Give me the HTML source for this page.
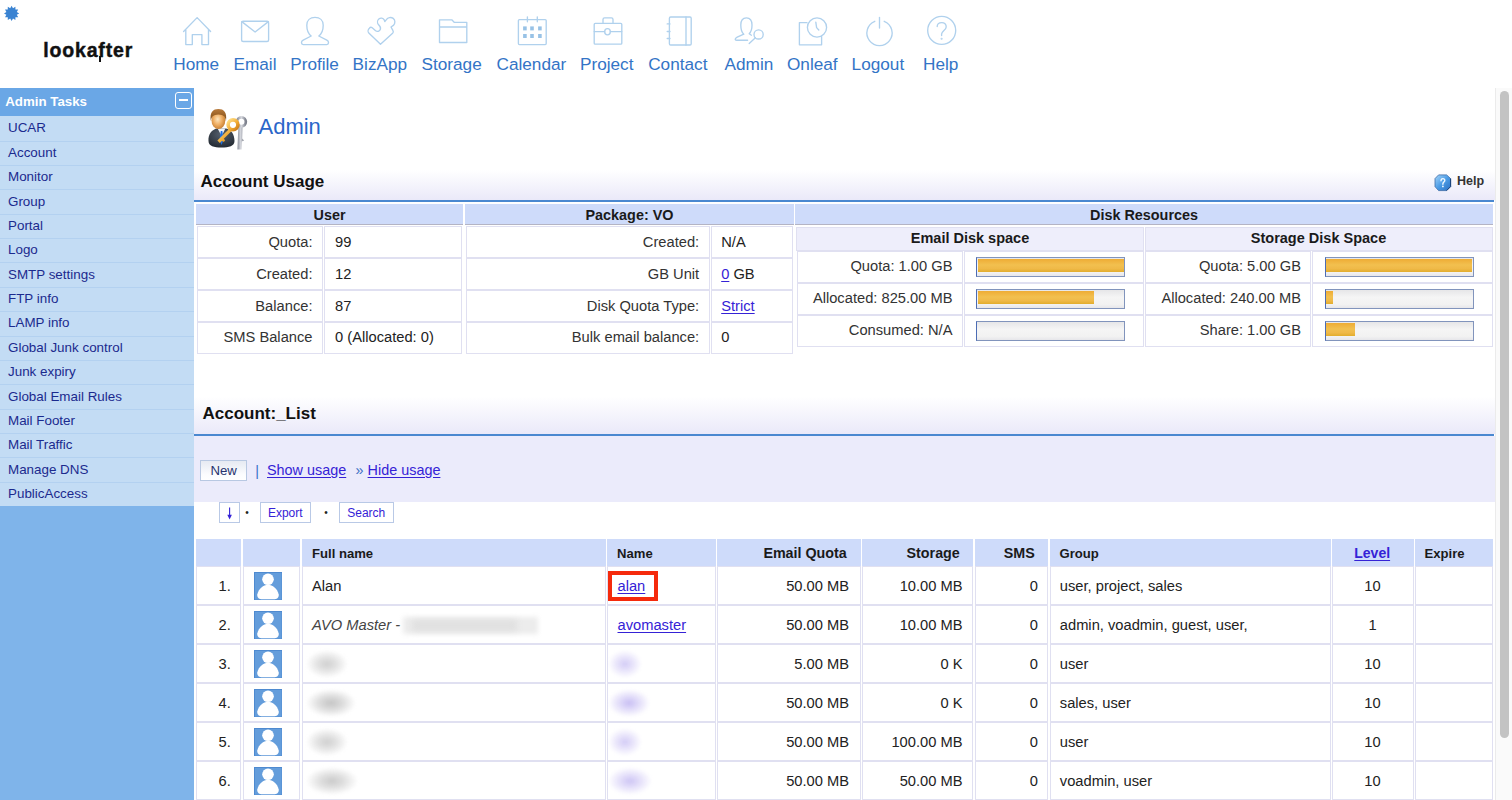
<!DOCTYPE html>
<html><head><meta charset="utf-8">
<style>
html,body{margin:0;padding:0;}
body{width:1512px;height:800px;overflow:hidden;position:relative;background:#fff;font-family:"Liberation Sans", sans-serif;}
.t{position:absolute;white-space:nowrap;line-height:normal;font-family:"Liberation Sans", sans-serif;}
u{text-decoration:underline;text-underline-offset:1.5px;}
</style></head><body>
<svg style="position:absolute;left:0;top:0" width="30" height="30"><polygon points="11.60,5.80 13.00,8.18 15.40,6.82 15.42,9.58 18.18,9.60 16.82,12.00 19.20,13.40 16.82,14.80 18.18,17.20 15.42,17.22 15.40,19.98 13.00,18.62 11.60,21.00 10.20,18.62 7.80,19.98 7.78,17.22 5.02,17.20 6.38,14.80 4.00,13.40 6.38,12.00 5.02,9.60 7.78,9.58 7.80,6.82 10.20,8.18" fill="#3a83d2"/></svg>
<div class="t" style="left:43.2px;top:38.75px;font-size:19.5px;color:#111;font-weight:bold;letter-spacing:0.85px;-webkit-text-stroke:0.45px #111;">lookafter</div>
<div style="position:absolute;left:98.6px;top:56px;width:2.4px;height:6px;background:#111;"></div>

<svg style="position:absolute;left:0;top:0" width="1000" height="90" fill="none" stroke="#b0d1ed" stroke-width="1.35" stroke-linejoin="round" stroke-linecap="round">
<!-- home -->
<path d="M183.6,31.5 L197.1,17.6 L210.6,31.5 M185.8,29.6 V44.6 H192.3 V34.6 H201.9 V44.6 H208.5 V29.6"/>
<!-- email -->
<rect x="241.6" y="21.2" width="27" height="20.3" rx="1.5"/>
<path d="M241.8,21.6 L255.1,32 L268.4,21.6"/>
<!-- profile -->
<path d="M311.2,36 C308,33.5 306.8,29 306.8,25.2 C306.8,20.2 310.2,17.4 315,17.4 C319.8,17.4 323.2,20.2 323.2,25.2 C323.2,29 322,33.5 318.8,36 L326.8,40.2 C329.2,41.4 329,44.6 326.8,44.6 L303.2,44.6 C301,44.6 300.8,41.4 303.2,40.2 Z"/>
<!-- bizapp puzzle -->
<path d="M380.5,44.3 L368.8,33 C367.6,31.8 368,29.6 369.4,28.2 C370.2,27.2 371.2,27 372.2,27.8 L375.6,30.8 C377.2,32 379.6,31.4 380.4,29.2 C381,27.6 379.6,25.8 378.4,24.6 C377.2,23 377.2,20.4 378.8,19 C380.6,17.6 383.2,18 384.2,19.8 L384.8,21.6 L386.4,19.6 C387.8,17.4 391,16.8 393.2,18.4 C395.4,20 395.4,23.6 393.4,25.4 L391,27 L393,30.6 C393.6,31.6 393.4,32.4 392.6,33.2 Z"/>
<!-- storage folder -->
<path d="M439.5,42.5 V19.8 H451.8 L454.4,22.4 H466.8 V42.5 Z M439.5,27 H466.8"/>
<!-- calendar -->
<rect x="518.4" y="19.6" width="27.8" height="25" rx="1"/>
<path d="M527.4,16.8 V21.8 M537.3,16.8 V21.8" />
<g fill="#98c2e6" stroke="none"><rect x="523.1" y="26.4" width="3.6" height="4"/><rect x="530.2" y="26.4" width="3.6" height="4"/><rect x="538.1" y="26.4" width="3.6" height="4"/><rect x="523.1" y="34" width="3.6" height="4"/><rect x="530.2" y="34" width="3.6" height="4"/><rect x="538.1" y="34" width="3.6" height="4"/></g>
<!-- project briefcase -->
<rect x="594.2" y="23.4" width="27.6" height="20.8" rx="1"/>
<path d="M603,23.4 V19.4 Q603,17.8 604.6,17.8 H611.4 Q613,17.8 613,19.4 V23.4 M594.2,31.6 H604.6 M610.4,31.6 H621.8"/>
<ellipse cx="607.5" cy="31.8" rx="2.8" ry="3.1"/>
<!-- contact notebook -->
<rect x="669.4" y="17" width="21.8" height="28" rx="1.2"/>
<path d="M686,17 V45 M667.2,23.9 H670 M667.2,31.5 H670 M667.2,38.5 H670"/>
<!-- admin person with key -->
<path d="M743.8,34.2 C741.6,32.4 740.8,28.6 740.8,25 C740.8,20.4 743,17.8 746.4,17.8 C749.8,17.8 752,20.4 752,25 C752,28.4 751.2,31.8 749.2,33.8 L751.4,35.2 M743.8,34.2 L737.2,37.2 C734.8,38.4 734.6,40.2 736.6,40.2 L747.6,40.2"/>
<circle cx="758.6" cy="34.4" r="4.6"/>
<path d="M755.4,37.8 L749.2,43.6"/>
<!-- onleaf -->
<path d="M807,22.6 H799.4 V44.8 H821.6 V36.4"/>
<circle cx="817" cy="27.5" r="9.6"/>
<path d="M815.8,22.2 L816.6,27.6 L818.8,30"/>
<!-- logout power -->
<path d="M874.8,21.3 A12.6,12.6 0 1 0 884.2,21.3"/>
<path d="M879.5,17.4 V28"/>
<!-- help -->
<circle cx="941.7" cy="30.4" r="14"/>
<path d="M937.2,26.6 C937.2,23.6 939.4,22.6 941.8,22.6 C944.4,22.6 946.4,24.4 946.2,27 C946,30 942,31 941.6,34 V35.6"/>
<circle cx="941.6" cy="38.8" r="0.4" fill="#b0d1ed"/>
</svg>
<div class="t" style="left:173.3px;top:53.53px;font-size:17.2px;color:#3374c6;font-weight:normal;">Home</div>
<div class="t" style="left:233.5px;top:53.53px;font-size:17.2px;color:#3374c6;font-weight:normal;">Email</div>
<div class="t" style="left:290.2px;top:53.53px;font-size:17.2px;color:#3374c6;font-weight:normal;">Profile</div>
<div class="t" style="left:352.6px;top:53.53px;font-size:17.2px;color:#3374c6;font-weight:normal;">BizApp</div>
<div class="t" style="left:421.5px;top:53.53px;font-size:17.2px;color:#3374c6;font-weight:normal;">Storage</div>
<div class="t" style="left:496.5px;top:53.53px;font-size:17.2px;color:#3374c6;font-weight:normal;">Calendar</div>
<div class="t" style="left:580px;top:53.53px;font-size:17.2px;color:#3374c6;font-weight:normal;">Project</div>
<div class="t" style="left:648.2px;top:53.53px;font-size:17.2px;color:#3374c6;font-weight:normal;">Contact</div>
<div class="t" style="left:724.6px;top:53.53px;font-size:17.2px;color:#3374c6;font-weight:normal;">Admin</div>
<div class="t" style="left:787px;top:53.53px;font-size:17.2px;color:#3374c6;font-weight:normal;">Onleaf</div>
<div class="t" style="left:851.6px;top:53.53px;font-size:17.2px;color:#3374c6;font-weight:normal;">Logout</div>
<div class="t" style="left:923px;top:53.53px;font-size:17.2px;color:#3374c6;font-weight:normal;">Help</div>
<div style="position:absolute;left:0px;top:88px;width:194px;height:712px;background:#7fb4ea;"></div>
<div style="position:absolute;left:0px;top:88px;width:194px;height:28px;background:#6aa7e6;"></div>
<div class="t" style="left:5.2px;top:94.16px;font-size:13.3px;color:#fff;font-weight:bold;">Admin Tasks</div>
<div style="position:absolute;left:175px;top:91.6px;width:17px;height:17px;border:1.5px solid #fff;border-radius:3px;box-sizing:border-box;"></div>
<div style="position:absolute;left:179px;top:99.3px;width:9px;height:2px;background:#fff;"></div>
<div style="position:absolute;left:0px;top:116px;width:194px;height:390px;background:#c3dcf4;"></div>
<div class="t" style="left:8px;top:120.47px;font-size:13.4px;color:#1b2a8e;font-weight:normal;">UCAR</div>
<div style="position:absolute;left:0px;top:140.5px;width:194px;height:1px;background:#b3d1f0;"></div>
<div class="t" style="left:8px;top:144.85px;font-size:13.4px;color:#1b2a8e;font-weight:normal;">Account</div>
<div style="position:absolute;left:0px;top:165.0px;width:194px;height:1px;background:#b3d1f0;"></div>
<div class="t" style="left:8px;top:169.22px;font-size:13.4px;color:#1b2a8e;font-weight:normal;">Monitor</div>
<div style="position:absolute;left:0px;top:189.0px;width:194px;height:1px;background:#b3d1f0;"></div>
<div class="t" style="left:8px;top:193.60px;font-size:13.4px;color:#1b2a8e;font-weight:normal;">Group</div>
<div style="position:absolute;left:0px;top:213.5px;width:194px;height:1px;background:#b3d1f0;"></div>
<div class="t" style="left:8px;top:217.97px;font-size:13.4px;color:#1b2a8e;font-weight:normal;">Portal</div>
<div style="position:absolute;left:0px;top:238.0px;width:194px;height:1px;background:#b3d1f0;"></div>
<div class="t" style="left:8px;top:242.35px;font-size:13.4px;color:#1b2a8e;font-weight:normal;">Logo</div>
<div style="position:absolute;left:0px;top:262.0px;width:194px;height:1px;background:#b3d1f0;"></div>
<div class="t" style="left:8px;top:266.72px;font-size:13.4px;color:#1b2a8e;font-weight:normal;">SMTP settings</div>
<div style="position:absolute;left:0px;top:286.5px;width:194px;height:1px;background:#b3d1f0;"></div>
<div class="t" style="left:8px;top:291.10px;font-size:13.4px;color:#1b2a8e;font-weight:normal;">FTP info</div>
<div style="position:absolute;left:0px;top:311.0px;width:194px;height:1px;background:#b3d1f0;"></div>
<div class="t" style="left:8px;top:315.47px;font-size:13.4px;color:#1b2a8e;font-weight:normal;">LAMP info</div>
<div style="position:absolute;left:0px;top:335.5px;width:194px;height:1px;background:#b3d1f0;"></div>
<div class="t" style="left:8px;top:339.85px;font-size:13.4px;color:#1b2a8e;font-weight:normal;">Global Junk control</div>
<div style="position:absolute;left:0px;top:360.0px;width:194px;height:1px;background:#b3d1f0;"></div>
<div class="t" style="left:8px;top:364.22px;font-size:13.4px;color:#1b2a8e;font-weight:normal;">Junk expiry</div>
<div style="position:absolute;left:0px;top:384.0px;width:194px;height:1px;background:#b3d1f0;"></div>
<div class="t" style="left:8px;top:388.60px;font-size:13.4px;color:#1b2a8e;font-weight:normal;">Global Email Rules</div>
<div style="position:absolute;left:0px;top:408.5px;width:194px;height:1px;background:#b3d1f0;"></div>
<div class="t" style="left:8px;top:412.97px;font-size:13.4px;color:#1b2a8e;font-weight:normal;">Mail Footer</div>
<div style="position:absolute;left:0px;top:433.0px;width:194px;height:1px;background:#b3d1f0;"></div>
<div class="t" style="left:8px;top:437.35px;font-size:13.4px;color:#1b2a8e;font-weight:normal;">Mail Traffic</div>
<div style="position:absolute;left:0px;top:457.0px;width:194px;height:1px;background:#b3d1f0;"></div>
<div class="t" style="left:8px;top:461.72px;font-size:13.4px;color:#1b2a8e;font-weight:normal;">Manage DNS</div>
<div style="position:absolute;left:0px;top:481.5px;width:194px;height:1px;background:#b3d1f0;"></div>
<div class="t" style="left:8px;top:486.10px;font-size:13.4px;color:#1b2a8e;font-weight:normal;">PublicAccess</div>
<div style="position:absolute;left:1495px;top:88px;width:17px;height:712px;background:#fafafa;border-left:1.5px solid #ebebeb;box-sizing:border-box;"></div>
<div style="position:absolute;left:1499.5px;top:91.2px;width:9.5px;height:647.3px;background:#c3c3c3;border-radius:5px;"></div>
<svg style="position:absolute;left:200px;top:100px" width="55" height="55" viewBox="200 100 55 55">
<defs>
<radialGradient id="face" cx="0.45" cy="0.45" r="0.6"><stop offset="0" stop-color="#fde6c0"/><stop offset="0.5" stop-color="#f0b066"/><stop offset="1" stop-color="#c47a2c"/></radialGradient>
<linearGradient id="hair" x1="0" y1="0" x2="0" y2="1"><stop offset="0" stop-color="#b87a3a"/><stop offset="1" stop-color="#7a4814"/></linearGradient>
<radialGradient id="suit" cx="0.5" cy="0.3" r="0.8"><stop offset="0" stop-color="#55606e"/><stop offset="1" stop-color="#1e242c"/></radialGradient>
<linearGradient id="gold" x1="0" y1="0" x2="1" y2="1"><stop offset="0" stop-color="#ffe08a"/><stop offset="0.6" stop-color="#f0a830"/><stop offset="1" stop-color="#c87818"/></linearGradient>
<linearGradient id="silver" x1="0" y1="0" x2="1" y2="0"><stop offset="0" stop-color="#8a8e9a"/><stop offset="0.5" stop-color="#d6d8de"/><stop offset="1" stop-color="#7c808c"/></linearGradient>
</defs>
<path d="M208.5,141 C208,134 212,129.5 217,128.5 L226,128.5 C231,129.5 234.5,134 234.5,141 C234.5,146 229,147.5 221.5,147.5 C214,147.5 208.5,146 208.5,141 Z" fill="url(#suit)"/>
<path d="M217.6,128.6 L221.6,136 L225.4,128.6 Z" fill="#eef2f8"/>
<path d="M220.8,131 L222.4,131 L223.4,140 L221.6,145 L219.4,140 Z" fill="#1f6fe0"/>
<ellipse cx="218.4" cy="120.2" rx="6.9" ry="8.9" fill="url(#face)"/>
<path d="M210.8,121 C209.6,112 213,109 218.4,109 C223.8,109 227.2,112 226,121 C225.4,116.5 223.6,114.6 218.4,114.4 C213.2,114.6 211.4,116.5 210.8,121 Z" fill="url(#hair)"/>
<path d="M238.4,125 L237.4,149.6 L241.4,149.6 L241.8,141.6 L244,140.6 L242.2,138.6 L242.6,125 Z" fill="url(#silver)"/>
<circle cx="241.4" cy="121.8" r="4.4" fill="none" stroke="url(#silver)" stroke-width="2.8"/>
<path d="M229.8,128.2 L217.4,140.4 L219.8,143 L222,140.8 L223.8,142 L225.2,140.2 L223.8,138.8 L232.2,130.6 Z" fill="url(#gold)"/>
<circle cx="233" cy="124.8" r="4.9" fill="none" stroke="url(#gold)" stroke-width="3.6"/>
</svg>
<div class="t" style="left:258.5px;top:114.39px;font-size:22px;color:#2a66c9;font-weight:normal;">Admin</div>
<div style="position:absolute;left:194px;top:160px;width:1301px;height:40px;background:linear-gradient(#ffffff 0%, #ffffff 25%, #eae9f9 100%);"></div>
<div style="position:absolute;left:194px;top:200px;width:1300px;height:2px;background:#4a88d0;"></div>
<div class="t" style="left:200.5px;top:171.92px;font-size:17px;color:#111;font-weight:bold;">Account Usage</div>
<div class="t" style="left:1457px;top:174.19px;font-size:12.5px;color:#333;font-weight:bold;">Help</div>
<svg style="position:absolute;left:1434px;top:174px" width="18" height="18" viewBox="0 0 18 18">
<defs><linearGradient id="hg" x1="0" y1="0" x2="1" y2="1"><stop offset="0" stop-color="#a6d6fa"/><stop offset="0.5" stop-color="#4c9ce6"/><stop offset="1" stop-color="#2a6ec0"/></linearGradient></defs>
<polygon points="4.6,0.9 12.6,0.9 16.6,4.6 16.6,12.6 12.6,16.6 4.6,16.6 1,12.6 1,4.6" fill="url(#hg)" stroke="#3a6aa6" stroke-width="0.8"/>
<path d="M16.6,4.6 V12.6 L12.6,16.6" fill="none" stroke="#173f78" stroke-width="1"/>
<path d="M7,6.8 C7,5.2 7.8,4.6 8.9,4.6 C10.1,4.6 10.8,5.3 10.8,6.4 C10.8,7.8 9,8.2 8.9,9.6 V10.2" fill="none" stroke="#f0f8ff" stroke-width="1.4" stroke-linecap="round"/>
<circle cx="8.9" cy="12.4" r="0.9" fill="#f0f8ff"/>
</svg>
<div style="position:absolute;left:196px;top:204px;width:267px;height:21px;background:#cedbfa;border-bottom:1.5px solid #b4b4c4;box-sizing:border-box;"></div>
<div style="position:absolute;left:465px;top:204px;width:329px;height:21px;background:#cedbfa;border-bottom:1.5px solid #b4b4c4;box-sizing:border-box;"></div>
<div style="position:absolute;left:795px;top:204px;width:698px;height:21px;background:#cedbfa;border-bottom:1.5px solid #b4b4c4;box-sizing:border-box;"></div>
<div class="t" style="left:29.5px;width:600px;text-align:center;top:207.27px;font-size:14.4px;color:#1a1a1a;font-weight:bold;">User</div>
<div class="t" style="left:329.5px;width:600px;text-align:center;top:207.27px;font-size:14.4px;color:#1a1a1a;font-weight:bold;">Package: VO</div>
<div class="t" style="left:844px;width:600px;text-align:center;top:206.77px;font-size:14.4px;color:#1a1a1a;font-weight:bold;">Disk Resources</div>
<div style="position:absolute;left:197px;top:226px;width:126px;height:32px;background:#fff;border:1px solid #e0e0f1;box-sizing:border-box;"></div>
<div style="position:absolute;left:324px;top:226px;width:138px;height:32px;background:#fff;border:1px solid #e0e0f1;box-sizing:border-box;"></div>
<div style="position:absolute;left:466px;top:226px;width:244px;height:32px;background:#fff;border:1px solid #e0e0f1;box-sizing:border-box;"></div>
<div style="position:absolute;left:711px;top:226px;width:82px;height:32px;background:#fff;border:1px solid #e0e0f1;box-sizing:border-box;"></div>
<div class="t" style="left:-287.5px;width:600px;text-align:right;top:234.10px;font-size:14.7px;color:#333;font-weight:normal;">Quota:</div>
<div class="t" style="left:335px;top:234.10px;font-size:14.7px;color:#222;font-weight:normal;">99</div>
<div class="t" style="left:99.20000000000005px;width:600px;text-align:right;top:234.10px;font-size:14.7px;color:#333;font-weight:normal;">Created:</div>
<div class="t" style="left:721.2px;top:234.10px;font-size:14.7px;color:#222;font-weight:normal;">N/A</div>
<div style="position:absolute;left:197px;top:258px;width:126px;height:32px;background:#fff;border:1px solid #e0e0f1;box-sizing:border-box;"></div>
<div style="position:absolute;left:324px;top:258px;width:138px;height:32px;background:#fff;border:1px solid #e0e0f1;box-sizing:border-box;"></div>
<div style="position:absolute;left:466px;top:258px;width:244px;height:32px;background:#fff;border:1px solid #e0e0f1;box-sizing:border-box;"></div>
<div style="position:absolute;left:711px;top:258px;width:82px;height:32px;background:#fff;border:1px solid #e0e0f1;box-sizing:border-box;"></div>
<div class="t" style="left:-287.5px;width:600px;text-align:right;top:265.60px;font-size:14.7px;color:#333;font-weight:normal;">Created:</div>
<div class="t" style="left:335px;top:265.60px;font-size:14.7px;color:#222;font-weight:normal;">12</div>
<div class="t" style="left:99.20000000000005px;width:600px;text-align:right;top:265.60px;font-size:14.7px;color:#333;font-weight:normal;">GB Unit</div>
<div class="t" style="left:721.2px;top:265.60px;font-size:14.7px;color:#222;font-weight:normal;"><u style="color:#3522d6">0</u> GB</div>
<div style="position:absolute;left:197px;top:290px;width:126px;height:32px;background:#fff;border:1px solid #e0e0f1;box-sizing:border-box;"></div>
<div style="position:absolute;left:324px;top:290px;width:138px;height:32px;background:#fff;border:1px solid #e0e0f1;box-sizing:border-box;"></div>
<div style="position:absolute;left:466px;top:290px;width:244px;height:32px;background:#fff;border:1px solid #e0e0f1;box-sizing:border-box;"></div>
<div style="position:absolute;left:711px;top:290px;width:82px;height:32px;background:#fff;border:1px solid #e0e0f1;box-sizing:border-box;"></div>
<div class="t" style="left:-287.5px;width:600px;text-align:right;top:297.50px;font-size:14.7px;color:#333;font-weight:normal;">Balance:</div>
<div class="t" style="left:335px;top:297.50px;font-size:14.7px;color:#222;font-weight:normal;">87</div>
<div class="t" style="left:99.20000000000005px;width:600px;text-align:right;top:297.50px;font-size:14.7px;color:#333;font-weight:normal;">Disk Quota Type:</div>
<div class="t" style="left:721.2px;top:297.50px;font-size:14.7px;color:#222;font-weight:normal;"><u style="color:#3522d6">Strict</u></div>
<div style="position:absolute;left:197px;top:322px;width:126px;height:32px;background:#fff;border:1px solid #e0e0f1;box-sizing:border-box;"></div>
<div style="position:absolute;left:324px;top:322px;width:138px;height:32px;background:#fff;border:1px solid #e0e0f1;box-sizing:border-box;"></div>
<div style="position:absolute;left:466px;top:322px;width:244px;height:32px;background:#fff;border:1px solid #e0e0f1;box-sizing:border-box;"></div>
<div style="position:absolute;left:711px;top:322px;width:82px;height:32px;background:#fff;border:1px solid #e0e0f1;box-sizing:border-box;"></div>
<div class="t" style="left:-287.5px;width:600px;text-align:right;top:329.00px;font-size:14.7px;color:#333;font-weight:normal;">SMS Balance</div>
<div class="t" style="left:335px;top:329.00px;font-size:14.7px;color:#222;font-weight:normal;">0 (Allocated: 0)</div>
<div class="t" style="left:99.20000000000005px;width:600px;text-align:right;top:329.00px;font-size:14.7px;color:#333;font-weight:normal;">Bulk email balance:</div>
<div class="t" style="left:721.2px;top:329.00px;font-size:14.7px;color:#222;font-weight:normal;">0</div>
<div style="position:absolute;left:796px;top:227px;width:348px;height:24px;background:#eeeefb;border:1px solid #e0e0f1;box-sizing:border-box;"></div>
<div style="position:absolute;left:1145px;top:227px;width:348px;height:24px;background:#eeeefb;border:1px solid #e0e0f1;box-sizing:border-box;"></div>
<div class="t" style="left:670px;width:600px;text-align:center;top:230.48px;font-size:14.5px;color:#1a1a1a;font-weight:bold;">Email Disk space</div>
<div class="t" style="left:1018.5px;width:600px;text-align:center;top:230.48px;font-size:14.5px;color:#1a1a1a;font-weight:bold;">Storage Disk Space</div>
<div style="position:absolute;left:797px;top:251px;width:166px;height:32px;background:#fff;border:1px solid #e0e0f1;box-sizing:border-box;"></div>
<div style="position:absolute;left:964px;top:251px;width:180px;height:32px;background:#fff;border:1px solid #e0e0f1;box-sizing:border-box;"></div>
<div style="position:absolute;left:1145px;top:251px;width:166px;height:32px;background:#fff;border:1px solid #e0e0f1;box-sizing:border-box;"></div>
<div style="position:absolute;left:1312px;top:251px;width:181px;height:32px;background:#fff;border:1px solid #e0e0f1;box-sizing:border-box;"></div>
<div class="t" style="left:352.5px;width:600px;text-align:right;top:258.20px;font-size:14.7px;color:#333;font-weight:normal;">Quota: 1.00 GB</div>
<div class="t" style="left:701px;width:600px;text-align:right;top:258.20px;font-size:14.7px;color:#333;font-weight:normal;">Quota: 5.00 GB</div>
<div style="position:absolute;left:976px;top:257px;width:149px;height:20px;background:linear-gradient(#e6e6e8,#f5f5f5 40%,#f2f2f2 80%,#e6e6ea);border:1.5px solid #8194bc;border-left-color:#4c6cb4;box-sizing:border-box;"></div>
<div style="position:absolute;left:977.5px;top:259.2px;width:146.0px;height:12.8px;background:linear-gradient(#eeac35,#f2c04f 45%,#efb948 75%,#e2ad2c);"></div>
<div style="position:absolute;left:1324.5px;top:257px;width:149px;height:20px;background:linear-gradient(#e6e6e8,#f5f5f5 40%,#f2f2f2 80%,#e6e6ea);border:1.5px solid #8194bc;border-left-color:#4c6cb4;box-sizing:border-box;"></div>
<div style="position:absolute;left:1326.0px;top:259.2px;width:146.0px;height:12.8px;background:linear-gradient(#eeac35,#f2c04f 45%,#efb948 75%,#e2ad2c);"></div>
<div style="position:absolute;left:797px;top:283px;width:166px;height:32px;background:#fff;border:1px solid #e0e0f1;box-sizing:border-box;"></div>
<div style="position:absolute;left:964px;top:283px;width:180px;height:32px;background:#fff;border:1px solid #e0e0f1;box-sizing:border-box;"></div>
<div style="position:absolute;left:1145px;top:283px;width:166px;height:32px;background:#fff;border:1px solid #e0e0f1;box-sizing:border-box;"></div>
<div style="position:absolute;left:1312px;top:283px;width:181px;height:32px;background:#fff;border:1px solid #e0e0f1;box-sizing:border-box;"></div>
<div class="t" style="left:352.5px;width:600px;text-align:right;top:290.30px;font-size:14.7px;color:#333;font-weight:normal;">Allocated: 825.00 MB</div>
<div class="t" style="left:701px;width:600px;text-align:right;top:290.30px;font-size:14.7px;color:#333;font-weight:normal;">Allocated: 240.00 MB</div>
<div style="position:absolute;left:976px;top:289px;width:149px;height:20px;background:linear-gradient(#e6e6e8,#f5f5f5 40%,#f2f2f2 80%,#e6e6ea);border:1.5px solid #8194bc;border-left-color:#4c6cb4;box-sizing:border-box;"></div>
<div style="position:absolute;left:977.5px;top:291.2px;width:116.8px;height:12.8px;background:linear-gradient(#eeac35,#f2c04f 45%,#efb948 75%,#e2ad2c);"></div>
<div style="position:absolute;left:1324.5px;top:289px;width:149px;height:20px;background:linear-gradient(#e6e6e8,#f5f5f5 40%,#f2f2f2 80%,#e6e6ea);border:1.5px solid #8194bc;border-left-color:#4c6cb4;box-sizing:border-box;"></div>
<div style="position:absolute;left:1326.0px;top:291.2px;width:6.7px;height:12.8px;background:linear-gradient(#eeac35,#f2c04f 45%,#efb948 75%,#e2ad2c);"></div>
<div style="position:absolute;left:797px;top:315px;width:166px;height:32px;background:#fff;border:1px solid #e0e0f1;box-sizing:border-box;"></div>
<div style="position:absolute;left:964px;top:315px;width:180px;height:32px;background:#fff;border:1px solid #e0e0f1;box-sizing:border-box;"></div>
<div style="position:absolute;left:1145px;top:315px;width:166px;height:32px;background:#fff;border:1px solid #e0e0f1;box-sizing:border-box;"></div>
<div style="position:absolute;left:1312px;top:315px;width:181px;height:32px;background:#fff;border:1px solid #e0e0f1;box-sizing:border-box;"></div>
<div class="t" style="left:352.5px;width:600px;text-align:right;top:322.00px;font-size:14.7px;color:#333;font-weight:normal;">Consumed: N/A</div>
<div class="t" style="left:701px;width:600px;text-align:right;top:322.00px;font-size:14.7px;color:#333;font-weight:normal;">Share: 1.00 GB</div>
<div style="position:absolute;left:976px;top:321px;width:149px;height:20px;background:linear-gradient(#e6e6e8,#f5f5f5 40%,#f2f2f2 80%,#e6e6ea);border:1.5px solid #8194bc;border-left-color:#4c6cb4;box-sizing:border-box;"></div>
<div style="position:absolute;left:1324.5px;top:321px;width:149px;height:20px;background:linear-gradient(#e6e6e8,#f5f5f5 40%,#f2f2f2 80%,#e6e6ea);border:1.5px solid #8194bc;border-left-color:#4c6cb4;box-sizing:border-box;"></div>
<div style="position:absolute;left:1326.0px;top:323.2px;width:28.6px;height:12.8px;background:linear-gradient(#eeac35,#f2c04f 45%,#efb948 75%,#e2ad2c);"></div>
<div style="position:absolute;left:194px;top:390px;width:1301px;height:44px;background:linear-gradient(#ffffff 0%, #ffffff 15%, #eae9f9 100%);"></div>
<div style="position:absolute;left:194px;top:434px;width:1300px;height:2px;background:#4a88d0;"></div>
<div class="t" style="left:202.5px;top:403.62px;font-size:17px;color:#111;font-weight:bold;">Account:_List</div>
<div style="position:absolute;left:194px;top:436px;width:1301px;height:66px;background:#ebebfb;"></div>
<div style="position:absolute;left:200.2px;top:460.3px;width:46.6px;height:20.4px;background:linear-gradient(#e6eaf2,#fbfcfe 70%,#fff);border:1.6px solid #b8c8e2;box-sizing:border-box;"></div>
<div class="t" style="left:-76.30000000000001px;width:600px;text-align:center;top:463.35px;font-size:13.2px;color:#27336e;font-weight:normal;">New</div>
<div class="t" style="left:255.2px;top:462.68px;font-size:14.5px;color:#3a74c8;font-weight:normal;">|</div>
<div class="t" style="left:267px;top:462.27px;font-size:14.4px;color:#3522d6;font-weight:normal;"><u>Show usage</u></div>
<div class="t" style="left:355.5px;top:462.27px;font-size:14.4px;color:#3a6fc4;font-weight:normal;">»</div>
<div class="t" style="left:367.6px;top:462.27px;font-size:14.4px;color:#3522d6;font-weight:normal;"><u>Hide usage</u></div>
<div style="position:absolute;left:219px;top:502px;width:21px;height:20.5px;background:#fff;border:1.5px solid #b9c9e6;box-sizing:border-box;"></div>
<div class="t" style="left:-70.5px;width:600px;text-align:center;top:504.84px;font-size:13px;color:#3522d6;font-weight:normal;"></div>
<svg style="position:absolute;left:220px;top:503px" width="20" height="20" viewBox="220 503 20 20"><path d="M229.6,507.6 V517" stroke="#3522d6" stroke-width="1.1"/><path d="M227.3,514.8 L229.6,519.4 L231.9,514.8 Z" fill="#3522d6"/></svg>
<div class="t" style="left:-53px;width:600px;text-align:center;top:506.95px;font-size:10px;color:#222;font-weight:normal;">•</div>
<div style="position:absolute;left:260px;top:502px;width:50.5px;height:20.5px;background:#fff;border:1.5px solid #b9c9e6;box-sizing:border-box;"></div>
<div class="t" style="left:-14.75px;width:600px;text-align:center;top:505.74px;font-size:12px;color:#3522d6;font-weight:normal;">Export</div>
<div class="t" style="left:26px;width:600px;text-align:center;top:506.95px;font-size:10px;color:#222;font-weight:normal;">•</div>
<div style="position:absolute;left:339px;top:502px;width:54.5px;height:20.5px;background:#fff;border:1.5px solid #b9c9e6;box-sizing:border-box;"></div>
<div class="t" style="left:66.25px;width:600px;text-align:center;top:505.74px;font-size:12px;color:#3522d6;font-weight:normal;">Search</div>
<div style="position:absolute;left:196px;top:538.5px;width:45px;height:28.5px;background:#cedbfa;border-bottom:1.5px solid #b4b4c4;box-sizing:border-box;"></div>
<div style="position:absolute;left:243px;top:538.5px;width:57px;height:28.5px;background:#cedbfa;border-bottom:1.5px solid #b4b4c4;box-sizing:border-box;"></div>
<div style="position:absolute;left:302px;top:538.5px;width:303.5px;height:28.5px;background:#cedbfa;border-bottom:1.5px solid #b4b4c4;box-sizing:border-box;"></div>
<div style="position:absolute;left:607px;top:538.5px;width:108.5px;height:28.5px;background:#cedbfa;border-bottom:1.5px solid #b4b4c4;box-sizing:border-box;"></div>
<div style="position:absolute;left:717px;top:538.5px;width:143.5px;height:28.5px;background:#cedbfa;border-bottom:1.5px solid #b4b4c4;box-sizing:border-box;"></div>
<div style="position:absolute;left:862px;top:538.5px;width:111px;height:28.5px;background:#cedbfa;border-bottom:1.5px solid #b4b4c4;box-sizing:border-box;"></div>
<div style="position:absolute;left:974.5px;top:538.5px;width:73.5px;height:28.5px;background:#cedbfa;border-bottom:1.5px solid #b4b4c4;box-sizing:border-box;"></div>
<div style="position:absolute;left:1049.5px;top:538.5px;width:281.0px;height:28.5px;background:#cedbfa;border-bottom:1.5px solid #b4b4c4;box-sizing:border-box;"></div>
<div style="position:absolute;left:1332px;top:538.5px;width:81.5px;height:28.5px;background:#cedbfa;border-bottom:1.5px solid #b4b4c4;box-sizing:border-box;"></div>
<div style="position:absolute;left:1414.5px;top:538.5px;width:78.5px;height:28.5px;background:#cedbfa;border-bottom:1.5px solid #b4b4c4;box-sizing:border-box;"></div>
<div class="t" style="left:312px;top:545.54px;font-size:13.1px;color:#1a1a1a;font-weight:bold;">Full name</div>
<div class="t" style="left:617px;top:545.54px;font-size:13.1px;color:#1a1a1a;font-weight:bold;">Name</div>
<div class="t" style="left:246.79999999999995px;width:600px;text-align:right;top:545.46px;font-size:14.3px;color:#1a1a1a;font-weight:bold;">Email Quota</div>
<div class="t" style="left:359.79999999999995px;width:600px;text-align:right;top:545.46px;font-size:14.3px;color:#1a1a1a;font-weight:bold;">Storage</div>
<div class="t" style="left:434.79999999999995px;width:600px;text-align:right;top:545.46px;font-size:14.3px;color:#1a1a1a;font-weight:bold;">SMS</div>
<div class="t" style="left:1059.5px;top:545.54px;font-size:13.1px;color:#1a1a1a;font-weight:bold;">Group</div>
<div class="t" style="left:1072.2px;width:600px;text-align:center;top:544.73px;font-size:14px;color:#3522d6;font-weight:bold;"><u style="color:#3522d6">Level</u></div>
<div class="t" style="left:1424.5px;top:545.54px;font-size:13.1px;color:#1a1a1a;font-weight:bold;">Expire</div>
<div style="position:absolute;left:196px;top:566px;width:45px;height:39px;background:#fff;border:1px solid #e0e0f1;box-sizing:border-box;"></div>
<div style="position:absolute;left:243px;top:566px;width:57px;height:39px;background:#fff;border:1px solid #e0e0f1;box-sizing:border-box;"></div>
<div style="position:absolute;left:302px;top:566px;width:303.5px;height:39px;background:#fff;border:1px solid #e0e0f1;box-sizing:border-box;"></div>
<div style="position:absolute;left:607px;top:566px;width:108.5px;height:39px;background:#fff;border:1px solid #e0e0f1;box-sizing:border-box;"></div>
<div style="position:absolute;left:717px;top:566px;width:143.5px;height:39px;background:#fff;border:1px solid #e0e0f1;box-sizing:border-box;"></div>
<div style="position:absolute;left:862px;top:566px;width:111px;height:39px;background:#fff;border:1px solid #e0e0f1;box-sizing:border-box;"></div>
<div style="position:absolute;left:974.5px;top:566px;width:73.5px;height:39px;background:#fff;border:1px solid #e0e0f1;box-sizing:border-box;"></div>
<div style="position:absolute;left:1049.5px;top:566px;width:281.0px;height:39px;background:#fff;border:1px solid #e0e0f1;box-sizing:border-box;"></div>
<div style="position:absolute;left:1332px;top:566px;width:81.5px;height:39px;background:#fff;border:1px solid #e0e0f1;box-sizing:border-box;"></div>
<div style="position:absolute;left:1414.5px;top:566px;width:78.5px;height:39px;background:#fff;border:1px solid #e0e0f1;box-sizing:border-box;"></div>
<div class="t" style="left:-369.2px;width:600px;text-align:right;top:577.50px;font-size:14.7px;color:#222;font-weight:normal;">1.</div>
<svg width="28.6" height="28.6" viewBox="0 0 29 29" style="position:absolute;left:253.8px;top:571.8px"><rect x="0" y="0" width="29" height="29" fill="#649ddb"/><rect x="0.5" y="0.5" width="28" height="28" fill="none" stroke="#4e8ad0" stroke-width="1"/><circle cx="14.2" cy="7.4" r="5.9" fill="#fff"/><path d="M14.2,13 C19,13 23.5,17 25,22.5 C25.6,25 24,27.4 21,27.6 L7.4,27.6 C4.4,27.4 2.8,25 3.4,22.5 C4.9,17 9.4,13 14.2,13 Z" fill="#fff"/></svg>
<div class="t" style="left:312px;top:577.50px;font-size:14.7px;color:#222;font-weight:normal;">Alan</div>
<div class="t" style="left:617.5px;top:577.50px;font-size:14.7px;color:#3522d6;font-weight:normal;"><u>alan</u></div>
<div class="t" style="left:249px;width:600px;text-align:right;top:577.50px;font-size:14.7px;color:#222;font-weight:normal;">50.00 MB</div>
<div class="t" style="left:362.5px;width:600px;text-align:right;top:577.50px;font-size:14.7px;color:#222;font-weight:normal;">10.00 MB</div>
<div class="t" style="left:437.79999999999995px;width:600px;text-align:right;top:577.50px;font-size:14.7px;color:#222;font-weight:normal;">0</div>
<div class="t" style="left:1059.8px;top:577.50px;font-size:14.7px;color:#222;font-weight:normal;">user, project, sales</div>
<div class="t" style="left:1072.5px;width:600px;text-align:center;top:577.50px;font-size:14.7px;color:#222;font-weight:normal;">10</div>
<div style="position:absolute;left:196px;top:605px;width:45px;height:39px;background:#fff;border:1px solid #e0e0f1;box-sizing:border-box;"></div>
<div style="position:absolute;left:243px;top:605px;width:57px;height:39px;background:#fff;border:1px solid #e0e0f1;box-sizing:border-box;"></div>
<div style="position:absolute;left:302px;top:605px;width:303.5px;height:39px;background:#fff;border:1px solid #e0e0f1;box-sizing:border-box;"></div>
<div style="position:absolute;left:607px;top:605px;width:108.5px;height:39px;background:#fff;border:1px solid #e0e0f1;box-sizing:border-box;"></div>
<div style="position:absolute;left:717px;top:605px;width:143.5px;height:39px;background:#fff;border:1px solid #e0e0f1;box-sizing:border-box;"></div>
<div style="position:absolute;left:862px;top:605px;width:111px;height:39px;background:#fff;border:1px solid #e0e0f1;box-sizing:border-box;"></div>
<div style="position:absolute;left:974.5px;top:605px;width:73.5px;height:39px;background:#fff;border:1px solid #e0e0f1;box-sizing:border-box;"></div>
<div style="position:absolute;left:1049.5px;top:605px;width:281.0px;height:39px;background:#fff;border:1px solid #e0e0f1;box-sizing:border-box;"></div>
<div style="position:absolute;left:1332px;top:605px;width:81.5px;height:39px;background:#fff;border:1px solid #e0e0f1;box-sizing:border-box;"></div>
<div style="position:absolute;left:1414.5px;top:605px;width:78.5px;height:39px;background:#fff;border:1px solid #e0e0f1;box-sizing:border-box;"></div>
<div class="t" style="left:-369.2px;width:600px;text-align:right;top:616.50px;font-size:14.7px;color:#222;font-weight:normal;">2.</div>
<svg width="28.6" height="28.6" viewBox="0 0 29 29" style="position:absolute;left:253.8px;top:610.8px"><rect x="0" y="0" width="29" height="29" fill="#649ddb"/><rect x="0.5" y="0.5" width="28" height="28" fill="none" stroke="#4e8ad0" stroke-width="1"/><circle cx="14.2" cy="7.4" r="5.9" fill="#fff"/><path d="M14.2,13 C19,13 23.5,17 25,22.5 C25.6,25 24,27.4 21,27.6 L7.4,27.6 C4.4,27.4 2.8,25 3.4,22.5 C4.9,17 9.4,13 14.2,13 Z" fill="#fff"/></svg>
<div class="t" style="left:312px;top:616.50px;font-size:14.7px;color:#444;font-weight:normal;font-style:italic;">AVO Master - </div>
<div class="t" style="left:617.5px;top:616.50px;font-size:14.7px;color:#3522d6;font-weight:normal;"><u>avomaster</u></div>
<div class="t" style="left:249px;width:600px;text-align:right;top:616.50px;font-size:14.7px;color:#222;font-weight:normal;">50.00 MB</div>
<div class="t" style="left:362.5px;width:600px;text-align:right;top:616.50px;font-size:14.7px;color:#222;font-weight:normal;">10.00 MB</div>
<div class="t" style="left:437.79999999999995px;width:600px;text-align:right;top:616.50px;font-size:14.7px;color:#222;font-weight:normal;">0</div>
<div class="t" style="left:1059.8px;top:616.50px;font-size:14.7px;color:#222;font-weight:normal;">admin, voadmin, guest, user,</div>
<div class="t" style="left:1072.5px;width:600px;text-align:center;top:616.50px;font-size:14.7px;color:#222;font-weight:normal;">1</div>
<div style="position:absolute;left:196px;top:644px;width:45px;height:39px;background:#fff;border:1px solid #e0e0f1;box-sizing:border-box;"></div>
<div style="position:absolute;left:243px;top:644px;width:57px;height:39px;background:#fff;border:1px solid #e0e0f1;box-sizing:border-box;"></div>
<div style="position:absolute;left:302px;top:644px;width:303.5px;height:39px;background:#fff;border:1px solid #e0e0f1;box-sizing:border-box;"></div>
<div style="position:absolute;left:607px;top:644px;width:108.5px;height:39px;background:#fff;border:1px solid #e0e0f1;box-sizing:border-box;"></div>
<div style="position:absolute;left:717px;top:644px;width:143.5px;height:39px;background:#fff;border:1px solid #e0e0f1;box-sizing:border-box;"></div>
<div style="position:absolute;left:862px;top:644px;width:111px;height:39px;background:#fff;border:1px solid #e0e0f1;box-sizing:border-box;"></div>
<div style="position:absolute;left:974.5px;top:644px;width:73.5px;height:39px;background:#fff;border:1px solid #e0e0f1;box-sizing:border-box;"></div>
<div style="position:absolute;left:1049.5px;top:644px;width:281.0px;height:39px;background:#fff;border:1px solid #e0e0f1;box-sizing:border-box;"></div>
<div style="position:absolute;left:1332px;top:644px;width:81.5px;height:39px;background:#fff;border:1px solid #e0e0f1;box-sizing:border-box;"></div>
<div style="position:absolute;left:1414.5px;top:644px;width:78.5px;height:39px;background:#fff;border:1px solid #e0e0f1;box-sizing:border-box;"></div>
<div class="t" style="left:-369.2px;width:600px;text-align:right;top:655.50px;font-size:14.7px;color:#222;font-weight:normal;">3.</div>
<svg width="28.6" height="28.6" viewBox="0 0 29 29" style="position:absolute;left:253.8px;top:649.8px"><rect x="0" y="0" width="29" height="29" fill="#649ddb"/><rect x="0.5" y="0.5" width="28" height="28" fill="none" stroke="#4e8ad0" stroke-width="1"/><circle cx="14.2" cy="7.4" r="5.9" fill="#fff"/><path d="M14.2,13 C19,13 23.5,17 25,22.5 C25.6,25 24,27.4 21,27.6 L7.4,27.6 C4.4,27.4 2.8,25 3.4,22.5 C4.9,17 9.4,13 14.2,13 Z" fill="#fff"/></svg>
<div class="t" style="left:249px;width:600px;text-align:right;top:655.50px;font-size:14.7px;color:#222;font-weight:normal;">5.00 MB</div>
<div class="t" style="left:362.5px;width:600px;text-align:right;top:655.50px;font-size:14.7px;color:#222;font-weight:normal;">0 K</div>
<div class="t" style="left:437.79999999999995px;width:600px;text-align:right;top:655.50px;font-size:14.7px;color:#222;font-weight:normal;">0</div>
<div class="t" style="left:1059.8px;top:655.50px;font-size:14.7px;color:#222;font-weight:normal;">user</div>
<div class="t" style="left:1072.5px;width:600px;text-align:center;top:655.50px;font-size:14.7px;color:#222;font-weight:normal;">10</div>
<div style="position:absolute;left:196px;top:683px;width:45px;height:39px;background:#fff;border:1px solid #e0e0f1;box-sizing:border-box;"></div>
<div style="position:absolute;left:243px;top:683px;width:57px;height:39px;background:#fff;border:1px solid #e0e0f1;box-sizing:border-box;"></div>
<div style="position:absolute;left:302px;top:683px;width:303.5px;height:39px;background:#fff;border:1px solid #e0e0f1;box-sizing:border-box;"></div>
<div style="position:absolute;left:607px;top:683px;width:108.5px;height:39px;background:#fff;border:1px solid #e0e0f1;box-sizing:border-box;"></div>
<div style="position:absolute;left:717px;top:683px;width:143.5px;height:39px;background:#fff;border:1px solid #e0e0f1;box-sizing:border-box;"></div>
<div style="position:absolute;left:862px;top:683px;width:111px;height:39px;background:#fff;border:1px solid #e0e0f1;box-sizing:border-box;"></div>
<div style="position:absolute;left:974.5px;top:683px;width:73.5px;height:39px;background:#fff;border:1px solid #e0e0f1;box-sizing:border-box;"></div>
<div style="position:absolute;left:1049.5px;top:683px;width:281.0px;height:39px;background:#fff;border:1px solid #e0e0f1;box-sizing:border-box;"></div>
<div style="position:absolute;left:1332px;top:683px;width:81.5px;height:39px;background:#fff;border:1px solid #e0e0f1;box-sizing:border-box;"></div>
<div style="position:absolute;left:1414.5px;top:683px;width:78.5px;height:39px;background:#fff;border:1px solid #e0e0f1;box-sizing:border-box;"></div>
<div class="t" style="left:-369.2px;width:600px;text-align:right;top:694.50px;font-size:14.7px;color:#222;font-weight:normal;">4.</div>
<svg width="28.6" height="28.6" viewBox="0 0 29 29" style="position:absolute;left:253.8px;top:688.8px"><rect x="0" y="0" width="29" height="29" fill="#649ddb"/><rect x="0.5" y="0.5" width="28" height="28" fill="none" stroke="#4e8ad0" stroke-width="1"/><circle cx="14.2" cy="7.4" r="5.9" fill="#fff"/><path d="M14.2,13 C19,13 23.5,17 25,22.5 C25.6,25 24,27.4 21,27.6 L7.4,27.6 C4.4,27.4 2.8,25 3.4,22.5 C4.9,17 9.4,13 14.2,13 Z" fill="#fff"/></svg>
<div class="t" style="left:249px;width:600px;text-align:right;top:694.50px;font-size:14.7px;color:#222;font-weight:normal;">50.00 MB</div>
<div class="t" style="left:362.5px;width:600px;text-align:right;top:694.50px;font-size:14.7px;color:#222;font-weight:normal;">0 K</div>
<div class="t" style="left:437.79999999999995px;width:600px;text-align:right;top:694.50px;font-size:14.7px;color:#222;font-weight:normal;">0</div>
<div class="t" style="left:1059.8px;top:694.50px;font-size:14.7px;color:#222;font-weight:normal;">sales, user</div>
<div class="t" style="left:1072.5px;width:600px;text-align:center;top:694.50px;font-size:14.7px;color:#222;font-weight:normal;">10</div>
<div style="position:absolute;left:196px;top:722px;width:45px;height:39px;background:#fff;border:1px solid #e0e0f1;box-sizing:border-box;"></div>
<div style="position:absolute;left:243px;top:722px;width:57px;height:39px;background:#fff;border:1px solid #e0e0f1;box-sizing:border-box;"></div>
<div style="position:absolute;left:302px;top:722px;width:303.5px;height:39px;background:#fff;border:1px solid #e0e0f1;box-sizing:border-box;"></div>
<div style="position:absolute;left:607px;top:722px;width:108.5px;height:39px;background:#fff;border:1px solid #e0e0f1;box-sizing:border-box;"></div>
<div style="position:absolute;left:717px;top:722px;width:143.5px;height:39px;background:#fff;border:1px solid #e0e0f1;box-sizing:border-box;"></div>
<div style="position:absolute;left:862px;top:722px;width:111px;height:39px;background:#fff;border:1px solid #e0e0f1;box-sizing:border-box;"></div>
<div style="position:absolute;left:974.5px;top:722px;width:73.5px;height:39px;background:#fff;border:1px solid #e0e0f1;box-sizing:border-box;"></div>
<div style="position:absolute;left:1049.5px;top:722px;width:281.0px;height:39px;background:#fff;border:1px solid #e0e0f1;box-sizing:border-box;"></div>
<div style="position:absolute;left:1332px;top:722px;width:81.5px;height:39px;background:#fff;border:1px solid #e0e0f1;box-sizing:border-box;"></div>
<div style="position:absolute;left:1414.5px;top:722px;width:78.5px;height:39px;background:#fff;border:1px solid #e0e0f1;box-sizing:border-box;"></div>
<div class="t" style="left:-369.2px;width:600px;text-align:right;top:733.50px;font-size:14.7px;color:#222;font-weight:normal;">5.</div>
<svg width="28.6" height="28.6" viewBox="0 0 29 29" style="position:absolute;left:253.8px;top:727.8px"><rect x="0" y="0" width="29" height="29" fill="#649ddb"/><rect x="0.5" y="0.5" width="28" height="28" fill="none" stroke="#4e8ad0" stroke-width="1"/><circle cx="14.2" cy="7.4" r="5.9" fill="#fff"/><path d="M14.2,13 C19,13 23.5,17 25,22.5 C25.6,25 24,27.4 21,27.6 L7.4,27.6 C4.4,27.4 2.8,25 3.4,22.5 C4.9,17 9.4,13 14.2,13 Z" fill="#fff"/></svg>
<div class="t" style="left:249px;width:600px;text-align:right;top:733.50px;font-size:14.7px;color:#222;font-weight:normal;">50.00 MB</div>
<div class="t" style="left:362.5px;width:600px;text-align:right;top:733.50px;font-size:14.7px;color:#222;font-weight:normal;">100.00 MB</div>
<div class="t" style="left:437.79999999999995px;width:600px;text-align:right;top:733.50px;font-size:14.7px;color:#222;font-weight:normal;">0</div>
<div class="t" style="left:1059.8px;top:733.50px;font-size:14.7px;color:#222;font-weight:normal;">user</div>
<div class="t" style="left:1072.5px;width:600px;text-align:center;top:733.50px;font-size:14.7px;color:#222;font-weight:normal;">10</div>
<div style="position:absolute;left:196px;top:761px;width:45px;height:39px;background:#fff;border:1px solid #e0e0f1;box-sizing:border-box;"></div>
<div style="position:absolute;left:243px;top:761px;width:57px;height:39px;background:#fff;border:1px solid #e0e0f1;box-sizing:border-box;"></div>
<div style="position:absolute;left:302px;top:761px;width:303.5px;height:39px;background:#fff;border:1px solid #e0e0f1;box-sizing:border-box;"></div>
<div style="position:absolute;left:607px;top:761px;width:108.5px;height:39px;background:#fff;border:1px solid #e0e0f1;box-sizing:border-box;"></div>
<div style="position:absolute;left:717px;top:761px;width:143.5px;height:39px;background:#fff;border:1px solid #e0e0f1;box-sizing:border-box;"></div>
<div style="position:absolute;left:862px;top:761px;width:111px;height:39px;background:#fff;border:1px solid #e0e0f1;box-sizing:border-box;"></div>
<div style="position:absolute;left:974.5px;top:761px;width:73.5px;height:39px;background:#fff;border:1px solid #e0e0f1;box-sizing:border-box;"></div>
<div style="position:absolute;left:1049.5px;top:761px;width:281.0px;height:39px;background:#fff;border:1px solid #e0e0f1;box-sizing:border-box;"></div>
<div style="position:absolute;left:1332px;top:761px;width:81.5px;height:39px;background:#fff;border:1px solid #e0e0f1;box-sizing:border-box;"></div>
<div style="position:absolute;left:1414.5px;top:761px;width:78.5px;height:39px;background:#fff;border:1px solid #e0e0f1;box-sizing:border-box;"></div>
<div class="t" style="left:-369.2px;width:600px;text-align:right;top:772.50px;font-size:14.7px;color:#222;font-weight:normal;">6.</div>
<svg width="28.6" height="28.6" viewBox="0 0 29 29" style="position:absolute;left:253.8px;top:766.8px"><rect x="0" y="0" width="29" height="29" fill="#649ddb"/><rect x="0.5" y="0.5" width="28" height="28" fill="none" stroke="#4e8ad0" stroke-width="1"/><circle cx="14.2" cy="7.4" r="5.9" fill="#fff"/><path d="M14.2,13 C19,13 23.5,17 25,22.5 C25.6,25 24,27.4 21,27.6 L7.4,27.6 C4.4,27.4 2.8,25 3.4,22.5 C4.9,17 9.4,13 14.2,13 Z" fill="#fff"/></svg>
<div class="t" style="left:249px;width:600px;text-align:right;top:772.50px;font-size:14.7px;color:#222;font-weight:normal;">50.00 MB</div>
<div class="t" style="left:362.5px;width:600px;text-align:right;top:772.50px;font-size:14.7px;color:#222;font-weight:normal;">50.00 MB</div>
<div class="t" style="left:437.79999999999995px;width:600px;text-align:right;top:772.50px;font-size:14.7px;color:#222;font-weight:normal;">0</div>
<div class="t" style="left:1059.8px;top:772.50px;font-size:14.7px;color:#222;font-weight:normal;">voadmin, user</div>
<div class="t" style="left:1072.5px;width:600px;text-align:center;top:772.50px;font-size:14.7px;color:#222;font-weight:normal;">10</div>
<div style="position:absolute;left:607.5px;top:571.3px;width:50px;height:30px;border:4px solid #f52a0c;box-sizing:border-box;"></div>
<div style="position:absolute;left:403px;top:617px;width:135px;height:17px;background:#ececec;filter:blur(2.5px);"></div>
<div style="position:absolute;left:412px;top:620px;width:105px;height:11px;background:#e0e0e0;filter:blur(3px);"></div>
<div style="position:absolute;left:306px;top:650px;width:42px;height:28px;background:radial-gradient(ellipse closest-side, rgba(190,190,190,0.7200000000000001) 0%, rgba(200,200,200,0.52) 45%, rgba(255,255,255,0) 100%);filter:blur(1.5px);"></div>
<div style="position:absolute;left:608px;top:650px;width:34px;height:28px;background:radial-gradient(ellipse closest-side, rgba(186,174,240,0.6400000000000001) 0%, rgba(200,190,244,0.44000000000000006) 45%, rgba(255,255,255,0) 100%);filter:blur(1.5px);"></div>
<div style="position:absolute;left:306px;top:689px;width:50px;height:28px;background:radial-gradient(ellipse closest-side, rgba(190,190,190,0.9) 0%, rgba(200,200,200,0.65) 45%, rgba(255,255,255,0) 100%);filter:blur(1.5px);"></div>
<div style="position:absolute;left:608px;top:689px;width:42px;height:28px;background:radial-gradient(ellipse closest-side, rgba(186,174,240,0.8) 0%, rgba(200,190,244,0.55) 45%, rgba(255,255,255,0) 100%);filter:blur(1.5px);"></div>
<div style="position:absolute;left:306px;top:728px;width:42px;height:28px;background:radial-gradient(ellipse closest-side, rgba(190,190,190,0.7200000000000001) 0%, rgba(200,200,200,0.52) 45%, rgba(255,255,255,0) 100%);filter:blur(1.5px);"></div>
<div style="position:absolute;left:608px;top:728px;width:34px;height:28px;background:radial-gradient(ellipse closest-side, rgba(186,174,240,0.6400000000000001) 0%, rgba(200,190,244,0.44000000000000006) 45%, rgba(255,255,255,0) 100%);filter:blur(1.5px);"></div>
<div style="position:absolute;left:306px;top:767px;width:52px;height:28px;background:radial-gradient(ellipse closest-side, rgba(190,190,190,0.81) 0%, rgba(200,200,200,0.5850000000000001) 45%, rgba(255,255,255,0) 100%);filter:blur(1.5px);"></div>
<div style="position:absolute;left:608px;top:767px;width:44px;height:28px;background:radial-gradient(ellipse closest-side, rgba(186,174,240,0.7200000000000001) 0%, rgba(200,190,244,0.49500000000000005) 45%, rgba(255,255,255,0) 100%);filter:blur(1.5px);"></div>
</body></html>
